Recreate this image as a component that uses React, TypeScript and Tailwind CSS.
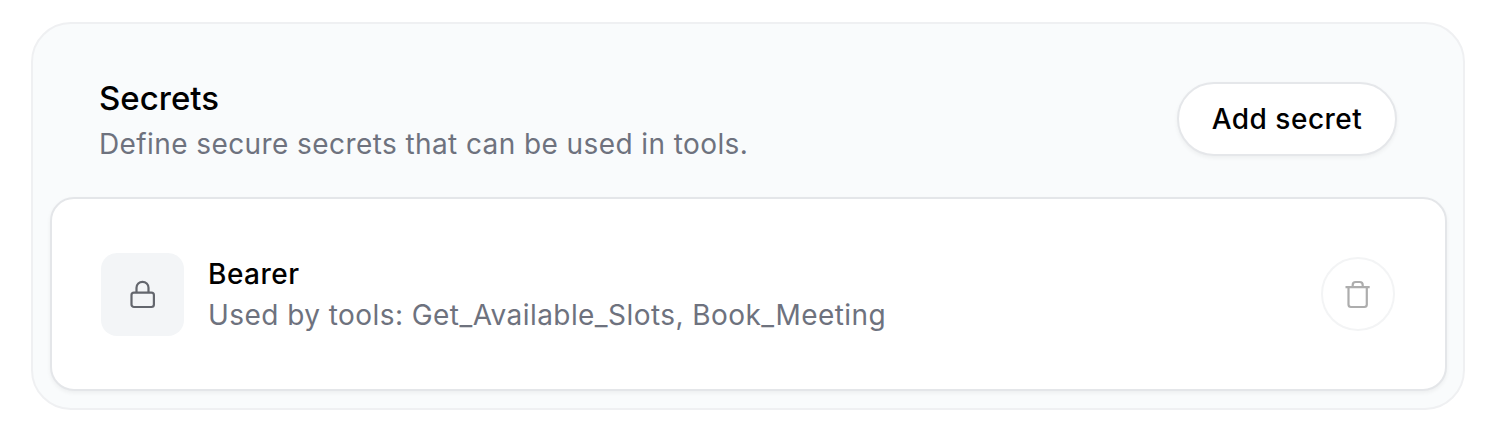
export default function App() {
  return (
    <div className="h-[436px] w-[1502px] bg-white pl-[31px] pt-[22px] font-['Inter',sans-serif] text-black">
      <section className="flex h-[388px] w-[1434px] flex-col rounded-[40px] border-2 border-[#eff0f2] bg-[#f9fbfc] pl-[17px] pr-4">
        <header className="flex h-[173px] shrink-0 items-start justify-between pl-[49px] pr-[50px]">
          <div className="pt-[53px]">
            <h2 className="h-[42px] text-[33px] font-medium leading-[42px]">Secrets</h2>
            <p className="mt-[5px] text-[28px] leading-[40px] tracking-[0.41px] text-[#6e727e]">Define secure secrets that can be used in tools.</p>
          </div>
          <button className="mt-[58px] flex h-[74px] w-[220px] items-center justify-center rounded-full border-2 border-[#e5e7ea] bg-white text-[28px] font-medium tracking-[0.5px] shadow-[0_2px_4px_rgba(0,0,0,0.05)]">Add secret</button>
        </header>
        <div className="flex h-[194px] items-center rounded-[24px] border-2 border-[#e4e6e9] bg-white pl-[49px] pr-[50px] shadow-[0_2px_4px_rgba(0,0,0,0.05)]">
          <div className="mt-px flex size-[83px] items-center justify-center rounded-[16px] bg-[#f3f5f7] text-[#63666d]">
            <svg width="33" height="33" viewBox="0 0 33 33" fill="none" stroke="currentColor" strokeWidth="2.2" strokeLinejoin="round"><rect x="5.5" y="14.6" width="22.4" height="14.4" rx="2.5" /><path d="M10.5 14.6V9.8a6 6 0 0 1 12 0v4.8" /></svg>
          </div>
          <div className="ml-[24px] flex-1">
            <h3 className="text-[28px] font-medium leading-[40px] tracking-[0.5px]">Bearer</h3>
            <p className="mt-px text-[28px] leading-[40px] tracking-[0.44px] text-[#6e727e]">Used by tools: Get_Available_Slots, Book_Meeting</p>
          </div>
          <button aria-label="Delete secret" className="flex size-[74px] items-center justify-center rounded-full border-2 border-[#f3f4f5] bg-white text-[#adadad]">
            <svg width="32" height="32" viewBox="0 0 32 32" fill="none" stroke="currentColor" strokeWidth="2.2"><path d="M3.5 9.2h24.2M6.5 9.2v17.3a2.5 2.5 0 0 0 2.5 2.5h13.3a2.5 2.5 0 0 0 2.5-2.5V9.2M10.7 9.2V7a3 3 0 0 1 3-3h4a3 3 0 0 1 3 3v2.2" /></svg>
          </button>
        </div>
      </section>
    </div>
  );
}
